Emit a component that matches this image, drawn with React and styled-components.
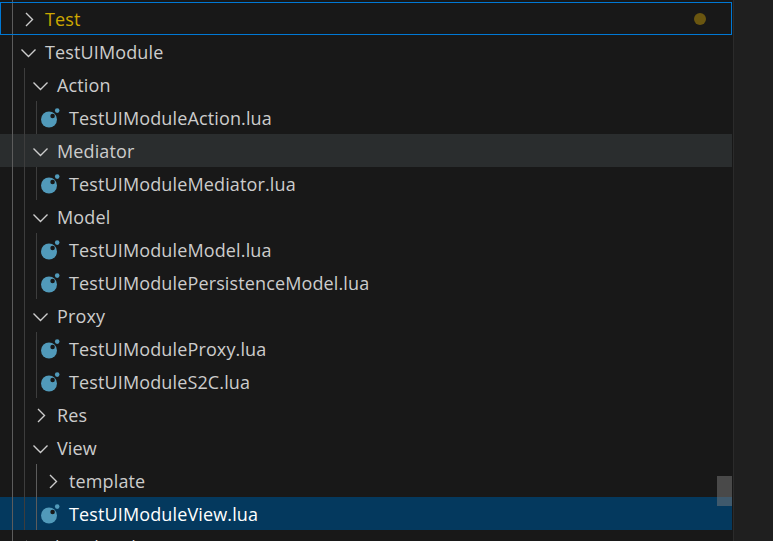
import React from 'react'
import styled, { createGlobalStyle } from 'styled-components'

const DIM = '#3d3d3d'
const ACTIVE = '#5c5c5c'

const rows = [
  { label: 'TestUIModule', depth: 0, kind: 'open', guides: [[12, ACTIVE]] },
  { label: 'Action', depth: 1, kind: 'open', guides: [[12, ACTIVE], [24, DIM]] },
  { label: 'TestUIModuleAction.lua', depth: 2, kind: 'file', guides: [[12, ACTIVE], [24, DIM], [36, DIM]] },
  { label: 'Mediator', depth: 1, kind: 'open', hover: true, guides: [[12, ACTIVE], [24, DIM]] },
  { label: 'TestUIModuleMediator.lua', depth: 2, kind: 'file', guides: [[12, ACTIVE], [24, DIM], [36, DIM]] },
  { label: 'Model', depth: 1, kind: 'open', guides: [[12, ACTIVE], [24, DIM]] },
  { label: 'TestUIModuleModel.lua', depth: 2, kind: 'file', guides: [[12, ACTIVE], [24, DIM], [36, DIM]] },
  { label: 'TestUIModulePersistenceModel.lua', depth: 2, kind: 'file', guides: [[12, ACTIVE], [24, DIM], [36, DIM]] },
  { label: 'Proxy', depth: 1, kind: 'open', guides: [[12, ACTIVE], [24, DIM]] },
  { label: 'TestUIModuleProxy.lua', depth: 2, kind: 'file', guides: [[12, ACTIVE], [24, DIM], [36, DIM]] },
  { label: 'TestUIModuleS2C.lua', depth: 2, kind: 'file', guides: [[12, ACTIVE], [24, DIM], [36, DIM]] },
  { label: 'Res', depth: 1, kind: 'closed', guides: [[12, ACTIVE], [24, DIM]] },
  { label: 'View', depth: 1, kind: 'open', guides: [[12, ACTIVE], [24, DIM]] },
  { label: 'template', depth: 2, kind: 'closed', guides: [[12, ACTIVE], [24, DIM], [36, ACTIVE]] },
  { label: 'TestUIModuleView.lua', depth: 2, kind: 'file', selected: true, guides: [[12, ACTIVE], [24, DIM], [36, ACTIVE]] },
  { label: 'ThumbnailsViewV...', depth: 0, kind: 'closed', guides: [[12, ACTIVE]] },
]

// indent guides are painted as part of each row's background
const guideLayers = guides =>
  guides.map(([x, c]) => `linear-gradient(${c}, ${c}) ${x}px 0 / 1px 100% no-repeat`).join(', ')

const Global = createGlobalStyle`
  html, body { margin: 0; height: 100%; background: #1f1f1f; overflow: hidden; }
`

const Page = styled.div`
  width: 773px;
  height: 541px;
  display: flex;
  overflow: hidden;
  font-family: "Open Sans", "Noto Sans", sans-serif;
  font-size: 18px;
  letter-spacing: 0.13px;
`

const Tree = styled.div`
  position: relative;
  width: 733px;
  flex: none;
  padding-top: 2px;
  background: linear-gradient(${ACTIVE}, ${ACTIVE}) 12px 0 / 1px 100% no-repeat, #181818;
  border-right: 1px solid #2b2b2b;
`

const Side = styled.div`
  flex: 1;
  background: #1f1f1f;
`

const Row = styled.div`
  height: 33px;
  width: 732px;
  display: flex;
  align-items: center;
  box-sizing: border-box;
  padding-left: ${p => p.$depth * 12 + 16}px;
  color: ${p => (p.$selected ? '#ffffff' : p.$color || '#cccccc')};
  background: ${p => p.$guides}, ${p => (p.$selected ? '#04395e' : p.$hover ? '#2a2d2e' : '#181818')};
  box-shadow: ${p => (p.$focus ? 'inset 0 0 0 1px #0078d4' : 'none')};
`

const Twistie = styled.svg`
  width: 22px;
  height: 22px;
  flex: none;
  margin-right: 7px;
  fill: none;
  stroke: #cccccc;
  stroke-width: 1.4;
`

const FileGlyph = styled(Twistie)`
  stroke: none;
`

const Label = styled.span`
  white-space: nowrap;
  line-height: 33px;
  padding-top: 1px;
`

const Dot = styled.span`
  margin-left: auto;
  margin-right: 26px;
  width: 12px;
  height: 12px;
  border-radius: 50%;
  background: #6a5610;
`

const Thumb = styled.div`
  position: absolute;
  left: 717px;
  top: 476px;
  width: 15px;
  height: 30px;
  background: rgba(121, 121, 121, 0.5);
`

function Chevron({ open }) {
  return (
    <Twistie viewBox="0 0 22 22">
      {open ? <path d="M5.5 8.5 L12.5 15.5 L19.5 8.5" /> : <path d="M10 5 L16.5 11.5 L10 18" />}
    </Twistie>
  )
}

function LuaIcon() {
  return (
    <FileGlyph viewBox="0 0 22 22">
      <circle cx="9" cy="12.5" r="8" fill="#519aba" />
      <circle cx="12.6" cy="9" r="2.3" fill="#181818" />
      <circle cx="17.2" cy="3.6" r="2.3" fill="#519aba" />
    </FileGlyph>
  )
}

export default function App() {
  return (
    <Page>
      <Global />
      <Tree>
        <Row $depth={0} $focus $color="#cca700" $guides={guideLayers([[12, ACTIVE]])}>
          <Chevron />
          <Label>Test</Label>
          <Dot />
        </Row>
        {rows.map(r => (
          <Row key={r.label} $depth={r.depth} $hover={r.hover} $selected={r.selected} $guides={guideLayers(r.guides)}>
            {r.kind === 'file' ? <LuaIcon /> : <Chevron open={r.kind === 'open'} />}
            <Label>{r.label}</Label>
          </Row>
        ))}
        <Thumb />
      </Tree>
      <Side />
    </Page>
  )
}
